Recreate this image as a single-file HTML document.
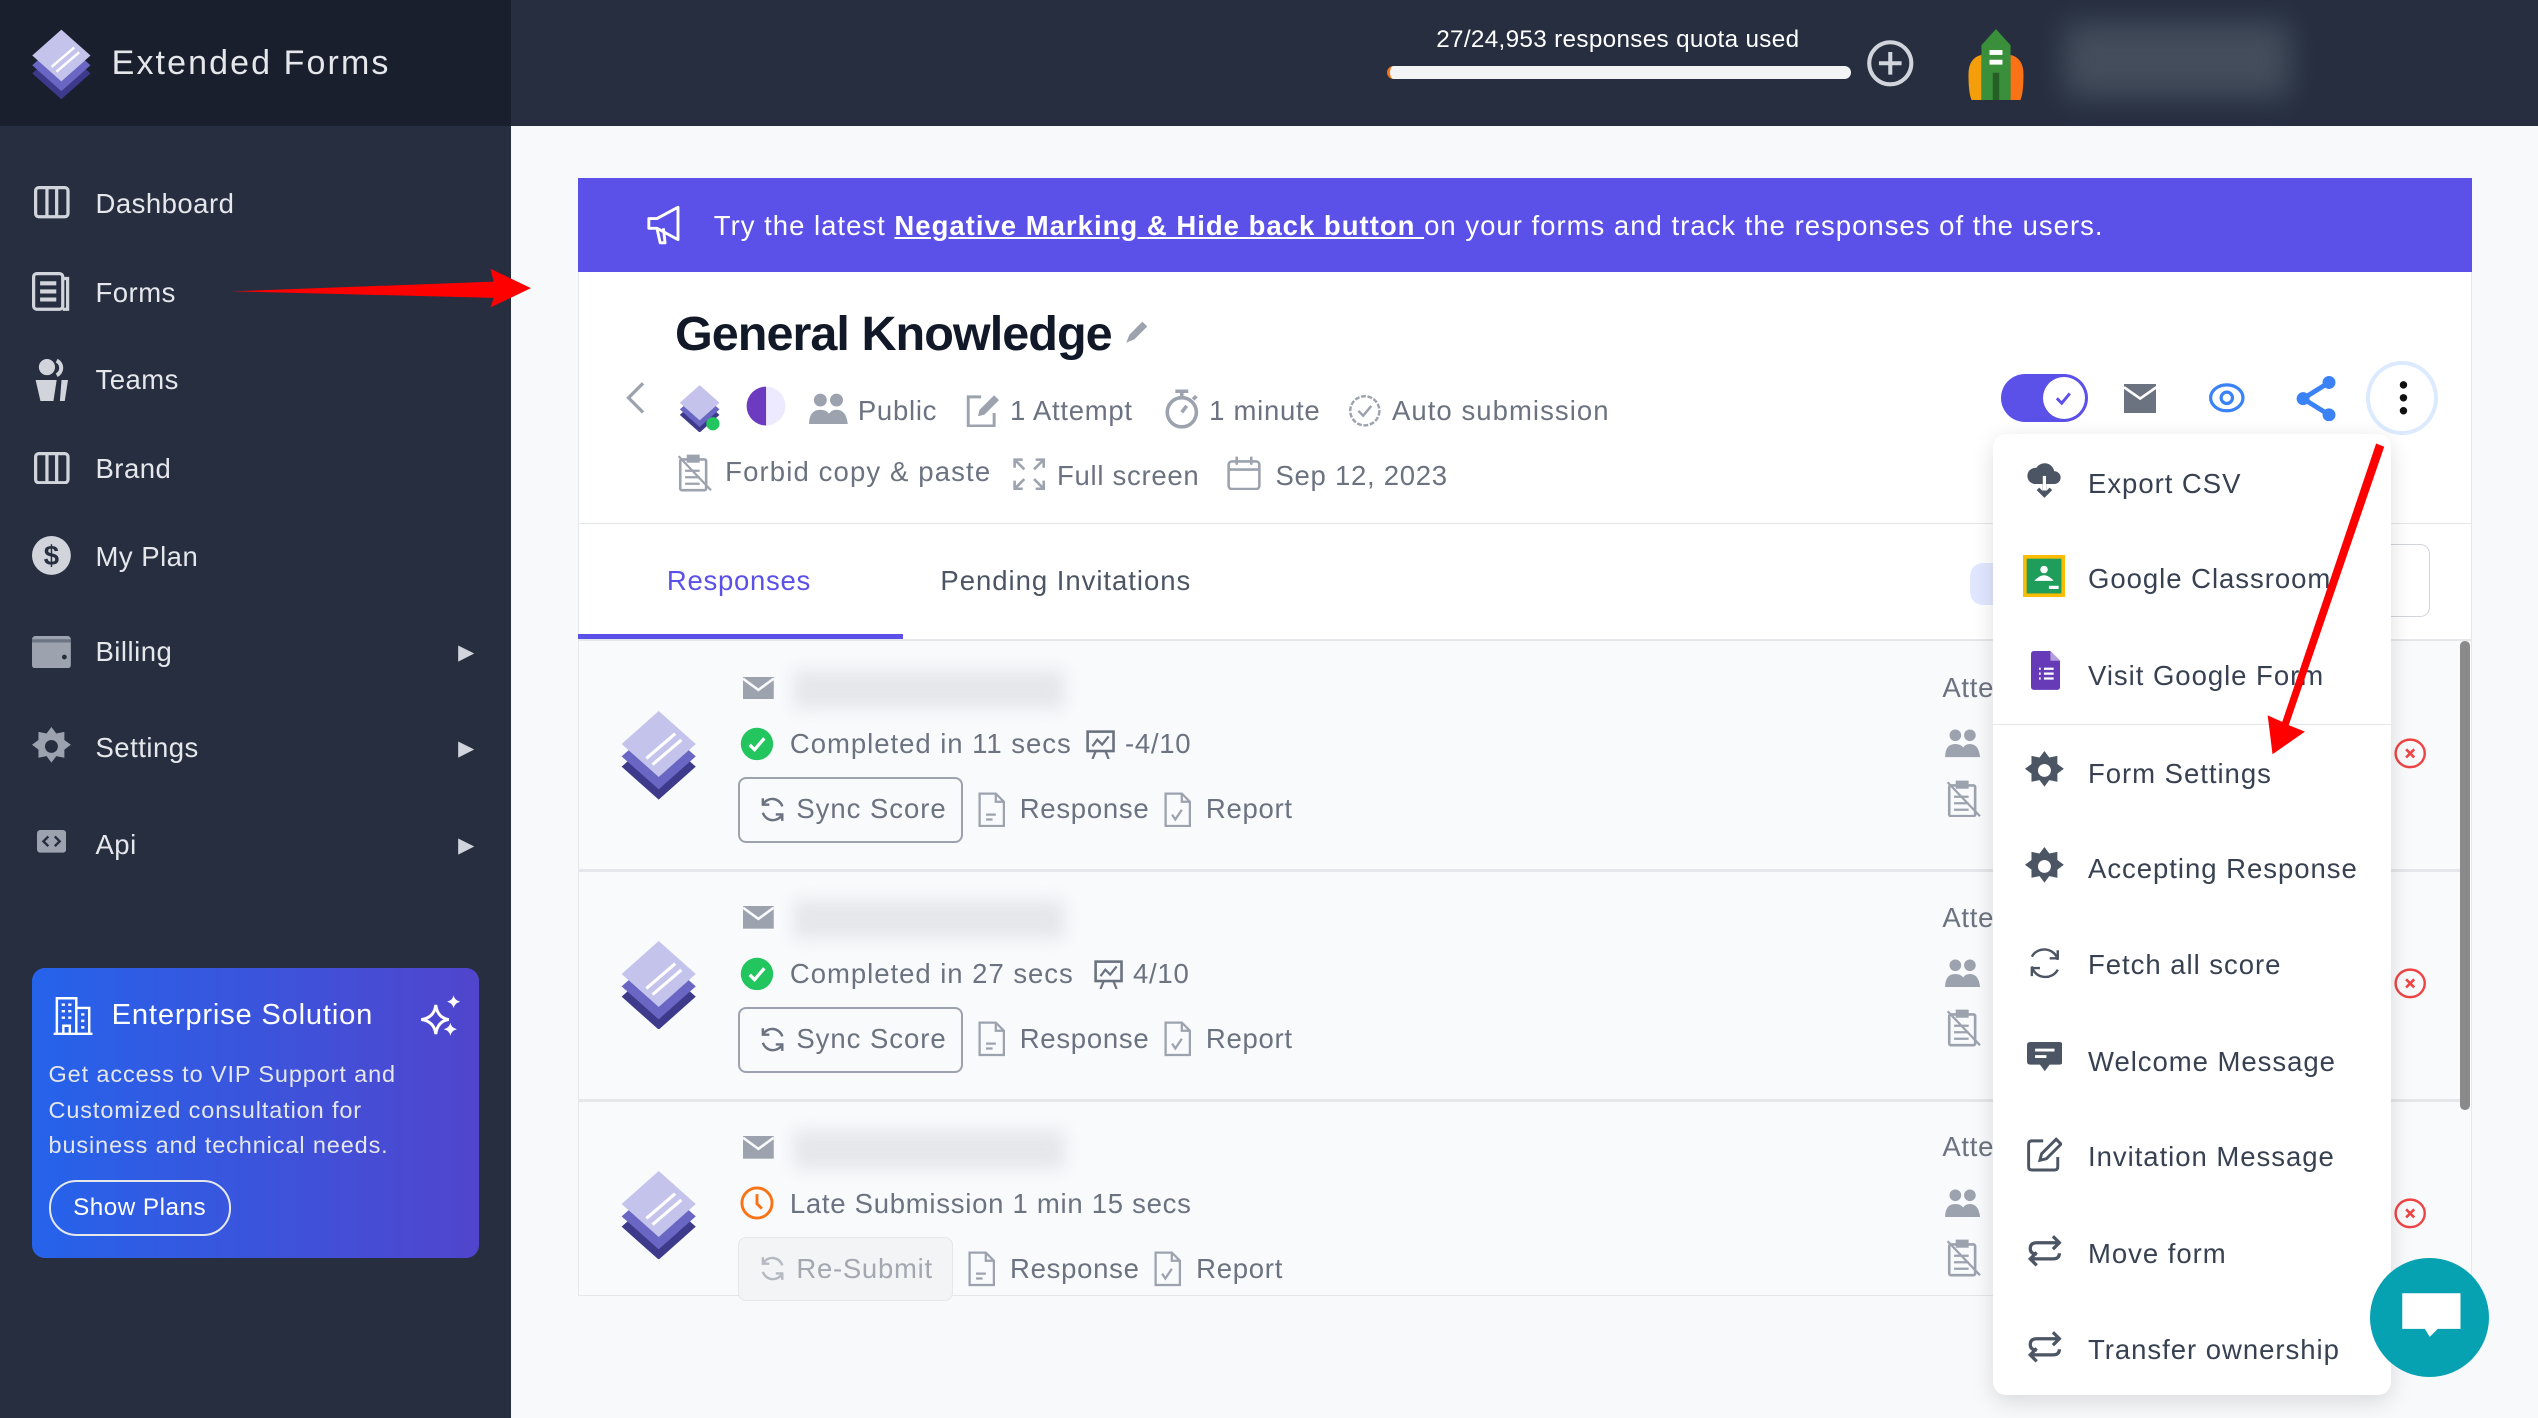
<!DOCTYPE html>
<html><head><meta charset="utf-8">
<style>
html,body{margin:0;padding:0;width:2538px;height:1418px;overflow:hidden;background:#f8f9fb;}
#w{position:relative;width:1568px;height:876px;zoom:1.61862;font-family:"Liberation Sans",sans-serif;overflow:hidden;background:#f8f9fb;}
.a{position:absolute;}
.t{position:absolute;white-space:nowrap;letter-spacing:0.45px;}
.nav{position:absolute;left:59px;color:#e5e7eb;font-size:17px;letter-spacing:0.3px;}
.mi{position:absolute;left:1290px;font-size:17px;color:#374151;white-space:nowrap;letter-spacing:0.6px;}
.g{color:#6b7280;}
.blur{position:absolute;background:#e5e7eb;filter:blur(5px);border-radius:4px;}
</style></head><body>
<div id="w">
<!-- sidebar -->
<div class="a" style="left:0;top:0;width:316px;height:876px;background:#262e40"></div>
<div class="a" style="left:0;top:0;width:316px;height:78px;background:#1a1f2e"></div>
<svg class="a" style="left:18px;top:17px" width="40" height="44" viewBox="0 0 40 44">
<path d="M20 12 L38 28 L20 44 L2 28Z" fill="#3d3a8c"/>
<path d="M20 7 L38 23 L20 39 L2 23Z" fill="#6a66c4"/>
<path d="M20 1 L38 17 L20 33 L2 17Z" fill="#c4c3ec"/>
<path d="M14 24 L28 12 M17 27 L31 15" stroke="#fff" stroke-width="1.5"/>
</svg>
<div class="t" style="left:69px;top:27px;color:#e5e7eb;font-size:21px;letter-spacing:1.3px">Extended Forms</div>

<svg class="a" style="left:21px;top:115px" width="22" height="20" viewBox="0 0 22 20"><rect x="1" y="1" width="20" height="18" rx="2" fill="none" stroke="#d1d5db" stroke-width="2"/><path d="M8 1v18M14 1v18" stroke="#d1d5db" stroke-width="2"/></svg>
<div class="nav" style="top:116px">Dashboard</div>
<svg class="a" style="left:20px;top:168px" width="24" height="24" viewBox="0 0 24 24"><rect x="1" y="1" width="18" height="22" rx="2" fill="none" stroke="#d1d5db" stroke-width="2"/><path d="M19 4h3v19h-3" fill="none" stroke="#d1d5db" stroke-width="2"/><path d="M5 7h10M5 12h10M5 17h10" stroke="#d1d5db" stroke-width="2.5"/></svg>
<div class="nav" style="top:171px">Forms</div>
<svg class="a" style="left:21px;top:222px" width="22" height="26" viewBox="0 0 22 26"><circle cx="8" cy="5" r="5" fill="#d1d5db"/><path d="M14 1a5 5 0 0 1 0 9" fill="none" stroke="#d1d5db" stroke-width="2.5"/><path d="M1 13h13l-2 13H4z" fill="#d1d5db"/><path d="M17 13h4l-2 13h-3z" fill="#d1d5db"/></svg>
<div class="nav" style="top:225px">Teams</div>
<svg class="a" style="left:21px;top:279px" width="22" height="20" viewBox="0 0 22 20"><rect x="1" y="1" width="20" height="18" rx="2" fill="none" stroke="#d1d5db" stroke-width="2"/><path d="M8 1v18M14 1v18" stroke="#d1d5db" stroke-width="2"/></svg>
<div class="nav" style="top:280px">Brand</div>
<svg class="a" style="left:20px;top:331px" width="24" height="24" viewBox="0 0 24 24"><circle cx="12" cy="12" r="12" fill="#d1d5db"/><text x="12" y="18" text-anchor="middle" font-size="17" font-weight="bold" fill="#262e40" font-family="Liberation Sans">$</text></svg>
<div class="nav" style="top:334px">My Plan</div>
<svg class="a" style="left:20px;top:393px" width="24" height="20" viewBox="0 0 24 20"><rect x="0" y="0" width="24" height="20" rx="2" fill="#9ca3af"/><rect x="0" y="2" width="24" height="2" fill="#262e40" opacity=".4"/><circle cx="20" cy="13" r="1.5" fill="#262e40"/></svg>
<div class="nav" style="top:393px">Billing</div>
<div class="t" style="left:283px;top:395px;color:#d1d5db;font-size:13px">▶</div>
<svg class="a" style="left:20px;top:449px" width="24" height="24" viewBox="0 0 24 24"><path d="M12 0l3 4 5-1 0 5 4 3-4 3 0 5-5-1-3 4-3-4-5 1 0-5-4-3 4-3 0-5 5 1z" fill="#9ca3af"/><circle cx="12" cy="12" r="4" fill="#262e40"/></svg>
<div class="nav" style="top:452px">Settings</div>
<div class="t" style="left:283px;top:454px;color:#d1d5db;font-size:13px">▶</div>
<svg class="a" style="left:23px;top:513px" width="18" height="14" viewBox="0 0 18 14"><rect width="18" height="14" rx="2" fill="#9ca3af"/><path d="M7 4l-3 3 3 3M11 4l3 3-3 3" stroke="#262e40" stroke-width="1.5" fill="none"/></svg>
<div class="nav" style="top:512px">Api</div>
<div class="t" style="left:283px;top:514px;color:#d1d5db;font-size:13px">▶</div>

<div class="a" style="left:20px;top:598px;width:276px;height:179px;border-radius:8px;background:linear-gradient(90deg,#2563eb,#5145cd)"></div>
<svg class="a" style="left:32px;top:615px" width="26" height="25" viewBox="0 0 26 25"><path d="M3 24V2h12v22M15 8h8v16M1 24h24M6 6h2M10 6h2M6 10h2M10 10h2M6 14h2M10 14h2M18 12h2M18 16h2M18 20h2M7 24v-5h4v5" stroke="#fff" stroke-width="1.5" fill="none"/></svg>
<div class="t" style="left:69px;top:617px;color:#fff;font-size:18px;letter-spacing:0.5px">Enterprise Solution</div>
<svg class="a" style="left:258px;top:613px" width="28" height="30" viewBox="0 0 28 30"><path d="M11 8 Q12 16 19 17 Q12 18 11 26 Q10 18 2 17 Q10 16 11 8Z" fill="none" stroke="#fff" stroke-width="1.8"/><path d="M22 2Q22.5 5 26 6Q22.5 7 22 10Q21.5 7 18 6Q21.5 5 22 2Z" fill="#fff"/><path d="M20 19Q20.5 22 24 23Q20.5 24 20 27Q19.5 24 16 23Q19.5 22 20 19Z" fill="#fff"/></svg>
<div class="t" style="left:30px;top:653px;color:#e5e7eb;font-size:14.5px;line-height:22px;letter-spacing:0.55px">Get access to VIP Support and<br>Customized consultation for<br>business and technical needs.</div>
<div class="a" style="left:30px;top:729px;width:110px;height:32px;border:1.5px solid #e5e7eb;border-radius:17px;color:#fff;font-size:15px;line-height:32px;text-align:center;letter-spacing:0.3px">Show Plans</div>

<!-- topbar -->
<div class="a" style="left:316px;top:0;width:1252px;height:78px;background:#262e40"></div>
<div class="t" style="left:857px;top:16px;width:285px;text-align:center;color:#fff;font-size:15px;letter-spacing:0.2px">27/24,953 responses quota used</div>
<div class="a" style="left:857px;top:41px;width:285px;height:8px;background:#f3f4f6;border-radius:4px;border-left:2px solid #f97316"></div>
<svg class="a" style="left:1153px;top:24px" width="30" height="30" viewBox="0 0 30 30"><circle cx="15" cy="15" r="13" fill="none" stroke="#d1d5db" stroke-width="2.5"/><path d="M15 8v14M8 15h14" stroke="#d1d5db" stroke-width="2.5"/></svg>
<svg class="a" style="left:1212px;top:18px" width="42" height="44" viewBox="0 0 42 44"><path d="M4 28Q4 18 12 16V44H6Q4 40 4 28Z" fill="#f59e0b"/><path d="M38 28Q38 18 30 16V44H36Q38 40 38 28Z" fill="#f97316"/><path d="M21 0L30 10V44H12V10Z" fill="#3a8f3a"/><rect x="17" y="13" width="8" height="3" fill="#fff"/><rect x="17" y="19" width="8" height="3" fill="#fff"/><rect x="19" y="27" width="4" height="17" fill="#265f26"/></svg>
<div class="a" style="left:1275px;top:14px;width:140px;height:46px;background:#4b5563;filter:blur(9px);opacity:.8"></div>

<!-- banner -->
<div class="a" style="left:357px;top:110px;width:1170px;height:58px;background:#5b50e8"></div>
<svg class="a" style="left:398px;top:126px" width="26" height="26" viewBox="0 0 26 26"><path d="M3 9h5l13-7v20L8 15H3z M8 15l2 9h3l-1-9" fill="none" stroke="#fff" stroke-width="1.8" stroke-linejoin="round"/></svg>
<div class="t" style="left:441px;top:130px;color:#fff;font-size:17px;letter-spacing:0.62px">Try the latest <b style="text-decoration:underline">Negative Marking &amp; Hide back button </b>on your forms and track the responses of the users.</div>

<!-- card -->
<div class="a" style="left:357px;top:168px;width:1169px;height:632px;background:#fff;border:1px solid #e5e7eb;border-top:none"></div>
<div class="t" style="left:417px;top:189px;font-size:30px;font-weight:bold;color:#111827;letter-spacing:-0.6px">General Knowledge</div>
<svg class="a" style="left:694px;top:198px" width="16" height="16" viewBox="0 0 16 16"><path d="M2 14l2-5 8-8 3 3-8 8z" fill="#9ca3af"/></svg>
<svg class="a" style="left:384px;top:235px" width="16" height="22" viewBox="0 0 16 22"><path d="M13 2L4 11l9 9" fill="none" stroke="#9ca3af" stroke-width="2"/></svg>
<svg class="a" style="left:418px;top:237px" width="28" height="30" viewBox="0 0 40 44"><path d="M20 12 L38 28 L20 44 L2 28Z" fill="#3d3a8c"/><path d="M20 7 L38 23 L20 39 L2 23Z" fill="#6a66c4"/><path d="M20 1 L38 17 L20 33 L2 17Z" fill="#c4c3ec"/><circle cx="32" cy="36" r="6" fill="#22c55e"/></svg>
<svg class="a" style="left:460px;top:238px" width="26" height="26" viewBox="0 0 26 26"><circle cx="13" cy="13" r="12" fill="#ede9fe"/><path d="M13 1a12 12 0 0 0 0 24z" fill="#6d3bbf"/></svg>
<svg class="a" style="left:500px;top:242px" width="24" height="20" viewBox="0 0 24 20"><circle cx="7" cy="5" r="4" fill="#9ca3af"/><circle cx="17" cy="5" r="4" fill="#9ca3af"/><path d="M0 20q0-9 7-9t7 9zM11 20q0-9 6-9t7 9z" fill="#9ca3af"/></svg>
<div class="t g" style="left:530px;top:244px;font-size:17px">Public</div>
<svg class="a" style="left:596px;top:242px" width="22" height="22" viewBox="0 0 22 22"><path d="M10 3H2v18h16v-8" fill="none" stroke="#9ca3af" stroke-width="1.8"/><path d="M8 15l1-4 9-9 3 3-9 9z" fill="#9ca3af"/></svg>
<div class="t g" style="left:624px;top:244px;font-size:17px">1 Attempt</div>
<svg class="a" style="left:719px;top:240px" width="22" height="26" viewBox="0 0 22 26"><circle cx="11" cy="15" r="9" fill="none" stroke="#9ca3af" stroke-width="2.2"/><path d="M7 2h8M11 2v4M11 15l3-4M18 7l2-2" stroke="#9ca3af" stroke-width="2.2"/></svg>
<div class="t g" style="left:747px;top:244px;font-size:17px">1 minute</div>
<svg class="a" style="left:832px;top:243px" width="22" height="22" viewBox="0 0 22 22"><circle cx="11" cy="11" r="9" fill="none" stroke="#9ca3af" stroke-width="1.5" stroke-dasharray="3 1"/><path d="M7 11l3 3 5-6" fill="none" stroke="#9ca3af" stroke-width="1.5"/></svg>
<div class="t g" style="left:860px;top:244px;font-size:17px;letter-spacing:0.65px">Auto submission</div>
<svg class="a" style="left:418px;top:280px" width="22" height="24" viewBox="0 0 22 24"><rect x="2" y="4" width="16" height="19" rx="1" fill="none" stroke="#9ca3af" stroke-width="1.6"/><rect x="6" y="1" width="8" height="5" fill="#9ca3af"/><path d="M5 11h9M5 15h9M5 19h9M1 2l20 21" stroke="#9ca3af" stroke-width="1.4"/></svg>
<div class="t g" style="left:448px;top:282px;font-size:17px;letter-spacing:0.7px">Forbid copy &amp; paste</div>
<svg class="a" style="left:626px;top:283px" width="20" height="20" viewBox="0 0 20 20"><path d="M1 6V1h5M14 1h5v5M19 14v5h-5M6 19H1v-5M1 1l6 6M19 1l-6 6M19 19l-6-6M1 19l6-6" fill="none" stroke="#9ca3af" stroke-width="1.6"/></svg>
<div class="t g" style="left:653px;top:284px;font-size:17px">Full screen</div>
<svg class="a" style="left:758px;top:281px" width="21" height="22" viewBox="0 0 21 22"><rect x="1" y="4" width="19" height="17" rx="2" fill="none" stroke="#9ca3af" stroke-width="1.6"/><path d="M1 9h19M6 1v5M15 1v5" stroke="#9ca3af" stroke-width="1.6"/></svg>
<div class="t g" style="left:788px;top:284px;font-size:17px">Sep 12, 2023</div>

<!-- action icons -->
<div class="a" style="left:1236px;top:231px;width:54px;height:30px;border-radius:15px;background:#5b50e8"></div>
<div class="a" style="left:1262px;top:233px;width:26px;height:26px;border-radius:13px;background:#fff"></div>
<svg class="a" style="left:1268px;top:239px" width="14" height="14" viewBox="0 0 14 14"><path d="M3 7l3 3 5-6" fill="none" stroke="#5b50e8" stroke-width="1.8"/></svg>
<svg class="a" style="left:1312px;top:237px" width="20" height="18" viewBox="0 0 20 18"><path d="M0 0h20v18H0z" fill="#6b7280"/><path d="M0 2l10 7 10-7" fill="none" stroke="#fff" stroke-width="1.6"/></svg>
<svg class="a" style="left:1365px;top:235px" width="22" height="22" viewBox="0 0 22 22"><ellipse cx="11" cy="11" rx="10" ry="8" fill="none" stroke="#3b82f6" stroke-width="2"/><circle cx="11" cy="11" r="3.5" fill="none" stroke="#3b82f6" stroke-width="2"/></svg>
<svg class="a" style="left:1418px;top:232px" width="26" height="28" viewBox="0 0 26 28"><circle cx="21" cy="4" r="4" fill="#3b82f6"/><circle cx="5" cy="14" r="4" fill="#3b82f6"/><circle cx="21" cy="24" r="4" fill="#3b82f6"/><path d="M21 4L5 14l16 10" fill="none" stroke="#3b82f6" stroke-width="3"/></svg>
<div class="a" style="left:1462px;top:223px;width:44px;height:46px;border-radius:50%;border:3px solid #dbeafe;box-sizing:border-box"></div>
<svg class="a" style="left:1481px;top:235px" width="8" height="22" viewBox="0 0 8 22"><circle cx="4" cy="3" r="2.3" fill="#111"/><circle cx="4" cy="11" r="2.3" fill="#111"/><circle cx="4" cy="19" r="2.3" fill="#111"/></svg>

<!-- tabs -->
<div class="a" style="left:357px;top:323px;width:1170px;height:1px;background:#e5e7eb"></div>
<div class="t" style="left:412px;top:349px;font-size:17px;color:#5b50e8">Responses</div>
<div class="t" style="left:581px;top:349px;font-size:17px;color:#4b5563;letter-spacing:0.6px">Pending Invitations</div>
<div class="a" style="left:357px;top:392px;width:201px;height:3px;background:#5b50e8"></div>
<div class="a" style="left:357px;top:395px;width:1170px;height:1px;background:#e5e7eb"></div>
<div class="a" style="left:1217px;top:348px;width:30px;height:26px;border-radius:8px;background:#e0e7ff"></div>
<div class="a" style="left:1440px;top:336px;width:61px;height:45px;border:1px solid #d1d5db;border-radius:6px;box-sizing:border-box"></div>

<!-- rows -->
<div class="a" style="left:358px;top:396px;width:1168px;height:404px;background:#f8fafc"></div>
<div class="a" style="left:358px;top:537px;width:1168px;height:2px;background:#e5e7eb"></div>
<div class="a" style="left:358px;top:679px;width:1168px;height:2px;background:#e5e7eb"></div>

<!-- row 1 -->
<svg class="a" style="left:380px;top:438px" width="54" height="56" viewBox="0 0 40 44"><path d="M20 12 L38 28 L20 44 L2 28Z" fill="#3d3a8c"/><path d="M20 7 L38 23 L20 39 L2 23Z" fill="#6a66c4"/><path d="M20 1 L38 17 L20 33 L2 17Z" fill="#c4c3ec"/><path d="M14 24 L28 12 M17 27 L31 15" stroke="#fff" stroke-width="1.5"/></svg>
<svg class="a" style="left:459px;top:418px" width="19" height="14" viewBox="0 0 19 14"><rect width="19" height="14" fill="#9ca3af"/><path d="M0 1l9.5 7 9.5-7" fill="none" stroke="#f8fafc" stroke-width="1.6"/></svg>
<div class="blur" style="left:490px;top:414px;width:168px;height:24px"></div>
<svg class="a" style="left:457px;top:449px" width="21" height="21" viewBox="0 0 21 21"><circle cx="10.5" cy="10.5" r="10" fill="#22c55e"/><path d="M6 11l3 3 6-7" fill="none" stroke="#fff" stroke-width="2"/></svg>
<div class="t g" style="left:488px;top:450px;font-size:17px;letter-spacing:0.6px">Completed in 11 secs</div>
<svg class="a" style="left:671px;top:451px" width="18" height="18" viewBox="0 0 18 18"><rect x="1" y="1" width="16" height="12" fill="none" stroke="#6b7280" stroke-width="1.6"/><path d="M4 10l3-4 3 3 4-5M6 13l-2 5M12 13l2 5" fill="none" stroke="#6b7280" stroke-width="1.4"/></svg>
<div class="t g" style="left:695px;top:450px;font-size:17px">-4/10</div>
<div class="a" style="left:456px;top:480px;width:139px;height:41px;border:1.5px solid #9ca3af;border-radius:5px;box-sizing:border-box"></div>
<svg class="a" style="left:468px;top:491px" width="18" height="18" viewBox="0 0 18 18"><path d="M15 7a6.5 6.5 0 0 0-12-1M3 11a6.5 6.5 0 0 0 12 1M3 2v4h4M15 16v-4h-4" fill="none" stroke="#6b7280" stroke-width="1.5"/></svg>
<div class="t g" style="left:492px;top:490px;font-size:17px;letter-spacing:0.6px">Sync Score</div>
<svg class="a" style="left:604px;top:489px" width="17" height="22" viewBox="0 0 17 22"><path d="M1 1h10l5 5v15H1z M11 1v5h5 M5 14h6M5 17h4" fill="none" stroke="#9ca3af" stroke-width="1.4"/></svg>
<div class="t g" style="left:630px;top:490px;font-size:17px">Response</div>
<svg class="a" style="left:719px;top:489px" width="17" height="22" viewBox="0 0 17 22"><path d="M1 1h10l5 5v15H1z M11 1v5h5 M5 14l2 3 4-6" fill="none" stroke="#9ca3af" stroke-width="1.4"/></svg>
<div class="t g" style="left:745px;top:490px;font-size:17px">Report</div>
<div class="t g" style="left:1200px;top:415px;font-size:17px">Atte</div>
<svg class="a" style="left:1201px;top:450px" width="23" height="18" viewBox="0 0 24 20"><circle cx="7" cy="5" r="4" fill="#9ca3af"/><circle cx="17" cy="5" r="4" fill="#9ca3af"/><path d="M0 20q0-9 7-9t7 9zM11 20q0-9 6-9t7 9z" fill="#9ca3af"/></svg>
<svg class="a" style="left:1202px;top:481px" width="22" height="24" viewBox="0 0 22 24"><rect x="2" y="4" width="16" height="19" rx="1" fill="none" stroke="#9ca3af" stroke-width="1.6"/><rect x="6" y="1" width="8" height="5" fill="#9ca3af"/><path d="M5 11h9M5 15h9M5 19h9M1 2l20 21" stroke="#9ca3af" stroke-width="1.4"/></svg>
<svg class="a" style="left:1479px;top:456px" width="20" height="19" viewBox="0 0 20 19"><ellipse cx="10" cy="9.5" rx="9" ry="8.5" fill="none" stroke="#ef4444" stroke-width="1.5"/><path d="M7.5 7l5 5M12.5 7l-5 5" stroke="#ef4444" stroke-width="1.6"/></svg>

<!-- row 2 -->
<svg class="a" style="left:380px;top:580px" width="54" height="56" viewBox="0 0 40 44"><path d="M20 12 L38 28 L20 44 L2 28Z" fill="#3d3a8c"/><path d="M20 7 L38 23 L20 39 L2 23Z" fill="#6a66c4"/><path d="M20 1 L38 17 L20 33 L2 17Z" fill="#c4c3ec"/><path d="M14 24 L28 12 M17 27 L31 15" stroke="#fff" stroke-width="1.5"/></svg>
<svg class="a" style="left:459px;top:560px" width="19" height="14" viewBox="0 0 19 14"><rect width="19" height="14" fill="#9ca3af"/><path d="M0 1l9.5 7 9.5-7" fill="none" stroke="#f8fafc" stroke-width="1.6"/></svg>
<div class="blur" style="left:490px;top:556px;width:168px;height:24px"></div>
<svg class="a" style="left:457px;top:591px" width="21" height="21" viewBox="0 0 21 21"><circle cx="10.5" cy="10.5" r="10" fill="#22c55e"/><path d="M6 11l3 3 6-7" fill="none" stroke="#fff" stroke-width="2"/></svg>
<div class="t g" style="left:488px;top:592px;font-size:17px;letter-spacing:0.6px">Completed in 27 secs</div>
<svg class="a" style="left:676px;top:593px" width="18" height="18" viewBox="0 0 18 18"><rect x="1" y="1" width="16" height="12" fill="none" stroke="#6b7280" stroke-width="1.6"/><path d="M4 10l3-4 3 3 4-5M6 13l-2 5M12 13l2 5" fill="none" stroke="#6b7280" stroke-width="1.4"/></svg>
<div class="t g" style="left:700px;top:592px;font-size:17px">4/10</div>
<div class="a" style="left:456px;top:622px;width:139px;height:41px;border:1.5px solid #9ca3af;border-radius:5px;box-sizing:border-box"></div>
<svg class="a" style="left:468px;top:633px" width="18" height="18" viewBox="0 0 18 18"><path d="M15 7a6.5 6.5 0 0 0-12-1M3 11a6.5 6.5 0 0 0 12 1M3 2v4h4M15 16v-4h-4" fill="none" stroke="#6b7280" stroke-width="1.5"/></svg>
<div class="t g" style="left:492px;top:632px;font-size:17px;letter-spacing:0.6px">Sync Score</div>
<svg class="a" style="left:604px;top:631px" width="17" height="22" viewBox="0 0 17 22"><path d="M1 1h10l5 5v15H1z M11 1v5h5 M5 14h6M5 17h4" fill="none" stroke="#9ca3af" stroke-width="1.4"/></svg>
<div class="t g" style="left:630px;top:632px;font-size:17px">Response</div>
<svg class="a" style="left:719px;top:631px" width="17" height="22" viewBox="0 0 17 22"><path d="M1 1h10l5 5v15H1z M11 1v5h5 M5 14l2 3 4-6" fill="none" stroke="#9ca3af" stroke-width="1.4"/></svg>
<div class="t g" style="left:745px;top:632px;font-size:17px">Report</div>
<div class="t g" style="left:1200px;top:557px;font-size:17px">Atte</div>
<svg class="a" style="left:1201px;top:592px" width="23" height="18" viewBox="0 0 24 20"><circle cx="7" cy="5" r="4" fill="#9ca3af"/><circle cx="17" cy="5" r="4" fill="#9ca3af"/><path d="M0 20q0-9 7-9t7 9zM11 20q0-9 6-9t7 9z" fill="#9ca3af"/></svg>
<svg class="a" style="left:1202px;top:623px" width="22" height="24" viewBox="0 0 22 24"><rect x="2" y="4" width="16" height="19" rx="1" fill="none" stroke="#9ca3af" stroke-width="1.6"/><rect x="6" y="1" width="8" height="5" fill="#9ca3af"/><path d="M5 11h9M5 15h9M5 19h9M1 2l20 21" stroke="#9ca3af" stroke-width="1.4"/></svg>
<svg class="a" style="left:1479px;top:598px" width="20" height="19" viewBox="0 0 20 19"><ellipse cx="10" cy="9.5" rx="9" ry="8.5" fill="none" stroke="#ef4444" stroke-width="1.5"/><path d="M7.5 7l5 5M12.5 7l-5 5" stroke="#ef4444" stroke-width="1.6"/></svg>

<!-- row 3 -->
<svg class="a" style="left:380px;top:722px" width="54" height="56" viewBox="0 0 40 44"><path d="M20 12 L38 28 L20 44 L2 28Z" fill="#3d3a8c"/><path d="M20 7 L38 23 L20 39 L2 23Z" fill="#6a66c4"/><path d="M20 1 L38 17 L20 33 L2 17Z" fill="#c4c3ec"/><path d="M14 24 L28 12 M17 27 L31 15" stroke="#fff" stroke-width="1.5"/></svg>
<svg class="a" style="left:459px;top:702px" width="19" height="14" viewBox="0 0 19 14"><rect width="19" height="14" fill="#9ca3af"/><path d="M0 1l9.5 7 9.5-7" fill="none" stroke="#f8fafc" stroke-width="1.6"/></svg>
<div class="blur" style="left:490px;top:698px;width:168px;height:24px"></div>
<svg class="a" style="left:457px;top:733px" width="21" height="21" viewBox="0 0 21 21"><circle cx="10.5" cy="10.5" r="9.3" fill="none" stroke="#f97316" stroke-width="1.8"/><path d="M10.5 5v6l3 3" fill="none" stroke="#f97316" stroke-width="1.8"/></svg>
<div class="t g" style="left:488px;top:734px;font-size:17px;letter-spacing:0.45px">Late Submission 1 min 15 secs</div>
<div class="a" style="left:456px;top:764px;width:133px;height:40px;border:1px solid #e5e7eb;border-radius:5px;box-sizing:border-box;background:#f3f4f6"></div>
<svg class="a" style="left:468px;top:775px" width="18" height="18" viewBox="0 0 18 18"><path d="M15 7a6.5 6.5 0 0 0-12-1M3 11a6.5 6.5 0 0 0 12 1M3 2v4h4M15 16v-4h-4" fill="none" stroke="#b5bac2" stroke-width="1.5"/></svg>
<div class="t" style="left:492px;top:774px;font-size:17px;color:#a3a8b0">Re-Submit</div>
<svg class="a" style="left:598px;top:773px" width="17" height="22" viewBox="0 0 17 22"><path d="M1 1h10l5 5v15H1z M11 1v5h5 M5 14h6M5 17h4" fill="none" stroke="#9ca3af" stroke-width="1.4"/></svg>
<div class="t g" style="left:624px;top:774px;font-size:17px">Response</div>
<svg class="a" style="left:713px;top:773px" width="17" height="22" viewBox="0 0 17 22"><path d="M1 1h10l5 5v15H1z M11 1v5h5 M5 14l2 3 4-6" fill="none" stroke="#9ca3af" stroke-width="1.4"/></svg>
<div class="t g" style="left:739px;top:774px;font-size:17px">Report</div>
<div class="t g" style="left:1200px;top:699px;font-size:17px">Atte</div>
<svg class="a" style="left:1201px;top:734px" width="23" height="18" viewBox="0 0 24 20"><circle cx="7" cy="5" r="4" fill="#9ca3af"/><circle cx="17" cy="5" r="4" fill="#9ca3af"/><path d="M0 20q0-9 7-9t7 9zM11 20q0-9 6-9t7 9z" fill="#9ca3af"/></svg>
<svg class="a" style="left:1202px;top:765px" width="22" height="24" viewBox="0 0 22 24"><rect x="2" y="4" width="16" height="19" rx="1" fill="none" stroke="#9ca3af" stroke-width="1.6"/><rect x="6" y="1" width="8" height="5" fill="#9ca3af"/><path d="M5 11h9M5 15h9M5 19h9M1 2l20 21" stroke="#9ca3af" stroke-width="1.4"/></svg>
<svg class="a" style="left:1479px;top:740px" width="20" height="19" viewBox="0 0 20 19"><ellipse cx="10" cy="9.5" rx="9" ry="8.5" fill="none" stroke="#ef4444" stroke-width="1.5"/><path d="M7.5 7l5 5M12.5 7l-5 5" stroke="#ef4444" stroke-width="1.6"/></svg>

<!-- scrollbar -->
<div class="a" style="left:1520px;top:396px;width:6px;height:290px;border-radius:3px;background:#8a8a8a"></div>

<!-- dropdown -->
<div class="a" style="left:1231px;top:268px;width:246px;height:594px;background:#fff;border-radius:8px;box-shadow:0 4px 14px rgba(0,0,0,.13)"></div>
<div class="a" style="left:1231px;top:447px;width:246px;height:1px;background:#e5e7eb"></div>
<svg class="a" style="left:1251px;top:286px" width="24" height="22" viewBox="0 0 24 22"><path d="M6 13a5 5 0 0 1 1-10 6 6 0 0 1 11 2 4 4 0 0 1 0 8z" fill="#4b5563"/><path d="M12 8v12M8 16l4 4 4-4" fill="none" stroke="#4b5563" stroke-width="2.2"/><path d="M12 8v9" stroke="#fff" stroke-width="2"/></svg>
<div class="mi" style="top:289px">Export CSV</div>
<svg class="a" style="left:1250px;top:343px" width="26" height="26" viewBox="0 0 26 26"><rect x="1" y="1" width="24" height="24" fill="#1f9d5a" stroke="#fbbc04" stroke-width="2.5"/><circle cx="13" cy="9" r="2.3" fill="#fff"/><path d="M7 16q6-7 12 0z" fill="#fff"/><rect x="16" y="19" width="6" height="2" fill="#fff"/></svg>
<div class="mi" style="top:348px">Google Classroom</div>
<svg class="a" style="left:1255px;top:402px" width="18" height="24" viewBox="0 0 18 24"><path d="M0 2q0-2 2-2h10l6 6v16q0 2-2 2H2q-2 0-2-2z" fill="#673ab7"/><path d="M12 0v6h6z" fill="#b39ddb"/><path d="M5 11h1M8 11h6M5 14h1M8 14h6M5 17h1M8 17h6" stroke="#fff" stroke-width="1.4"/></svg>
<div class="mi" style="top:408px">Visit Google Form</div>
<svg class="a" style="left:1251px;top:464px" width="24" height="24" viewBox="0 0 24 24"><path d="M12 0l3 4 5-1 0 5 4 3-4 3 0 5-5-1-3 4-3-4-5 1 0-5-4-3 4-3 0-5 5 1z" fill="#4b5563"/><circle cx="12" cy="12" r="4" fill="#fff"/></svg>
<div class="mi" style="top:468px">Form Settings</div>
<svg class="a" style="left:1251px;top:523px" width="24" height="24" viewBox="0 0 24 24"><path d="M12 0l3 4 5-1 0 5 4 3-4 3 0 5-5-1-3 4-3-4-5 1 0-5-4-3 4-3 0-5 5 1z" fill="#4b5563"/><circle cx="12" cy="12" r="4" fill="#fff"/></svg>
<div class="mi" style="top:527px">Accepting Response</div>
<svg class="a" style="left:1252px;top:585px" width="22" height="20" viewBox="0 0 22 20"><path d="M19 8a8.5 8 0 0 0-16-2M3 12a8.5 8 0 0 0 16 2M19 2v5h-5M3 18v-5h5" fill="none" stroke="#4b5563" stroke-width="1.5"/></svg>
<div class="mi" style="top:586px">Fetch all score</div>
<svg class="a" style="left:1252px;top:644px" width="22" height="20" viewBox="0 0 22 20"><path d="M2 0h18q2 0 2 2v10q0 2-2 2H14l-3 4-3-4H2q-2 0-2-2V2q0-2 2-2z" fill="#4b5563"/><path d="M5 5h12M5 9h7" stroke="#fff" stroke-width="1.8"/></svg>
<div class="mi" style="top:646px">Welcome Message</div>
<svg class="a" style="left:1252px;top:702px" width="22" height="22" viewBox="0 0 22 22"><path d="M10 3H3q-2 0-2 2v14q0 2 2 2h14q2 0 2-2v-6" fill="none" stroke="#4b5563" stroke-width="1.8"/><path d="M8 15l1-4 9-9 3 3-9 9z" fill="none" stroke="#4b5563" stroke-width="1.8"/></svg>
<div class="mi" style="top:705px">Invitation Message</div>
<svg class="a" style="left:1252px;top:762px" width="22" height="22" viewBox="0 0 22 22"><path d="M16 2l4 4-4 4M20 6H6q-4 0-4 3.5T6 13M6 12l-4 4 4 4M2 16h14q4 0 4-3.5" fill="none" stroke="#4b5563" stroke-width="2"/></svg>
<div class="mi" style="top:765px">Move form</div>
<svg class="a" style="left:1252px;top:821px" width="22" height="22" viewBox="0 0 22 22"><path d="M16 2l4 4-4 4M20 6H6q-4 0-4 3.5T6 13M6 12l-4 4 4 4M2 16h14q4 0 4-3.5" fill="none" stroke="#4b5563" stroke-width="2"/></svg>
<div class="mi" style="top:824px">Transfer ownership</div>

<!-- chat bubble -->
<div class="a" style="left:1464px;top:777px;width:74px;height:74px;border-radius:50%;background:#06a2b2"></div>
<svg class="a" style="left:1482px;top:797px" width="40" height="34" viewBox="0 0 40 34"><path d="M2 2h36v22H24l-5 5-3-5H2z" fill="#fff"/></svg>

<!-- red arrows -->
<svg class="a" style="left:0;top:0" width="1568" height="876" viewBox="0 0 1568 876">
<path d="M143 180 L305 174 L303 166 L328 178 L303 190 L305 184 Z" fill="#ff0000"/>
<path d="M1473 276 L1414 448 L1424 452 L1404 466 L1401 442 L1410 446 L1468 274 Z" fill="#ff0000"/>
</svg>
</div>
</body></html>
